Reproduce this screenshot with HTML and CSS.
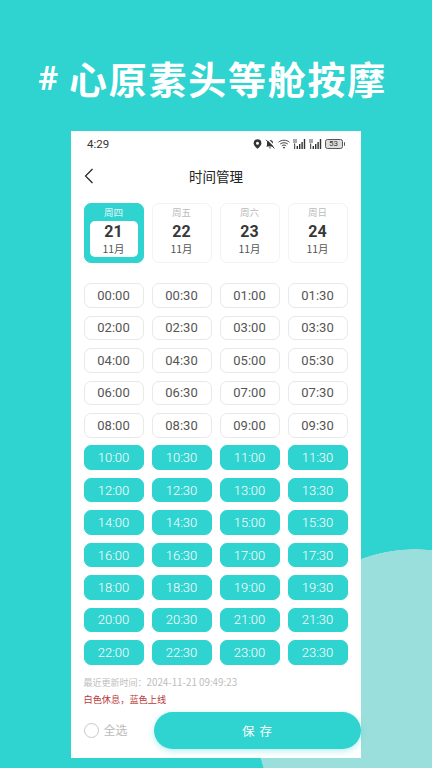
FILE: index.html
```html
<!DOCTYPE html>
<html lang="zh-CN">
<head>
<meta charset="utf-8">
<title>时间管理</title>
<link rel="stylesheet" href="styles.css">
</head>
<body>
<h1 class="headline"><span class="hash">#</span>心原素头等舱按摩</h1>
<main class="screen">
  <div class="status">
    <span class="clock">4:29</span>
    <div class="status-icons">
      <svg width="9" height="10" viewBox="0 0 9 10"><path fill="#333" fill-rule="evenodd" d="M4.5 0.3a3.9 3.9 0 0 1 3.9 3.9C8.4 6.6 4.5 9.8 4.5 9.8S.6 6.6.6 4.2A3.9 3.9 0 0 1 4.5.3zm0 2.4a1.5 1.5 0 1 0 0 3 1.5 1.5 0 0 0 0-3z"/></svg>
      <svg width="10" height="10" viewBox="0 0 10 10"><path fill="#333" d="M5 1a3 3 0 0 1 3 3v2.5l1 1H1l1-1V4a3 3 0 0 1 3-3zM4 8.4h2a1 1 0 0 1-2 0z"/><path stroke="#fff" stroke-width="1.6" d="M2.4 0l8 8.2"/><path stroke="#333" stroke-width="1" d="M1 .8l8.4 8.6"/></svg>
      <svg width="12" height="10" viewBox="0 0 12 10" fill="none" stroke="#333" stroke-width=".9"><path d="M.5 3.2C3.6.6 8.4.6 11.5 3.2M2.2 5C4.3 3.3 7.7 3.3 9.8 5M3.8 6.8c1.3-1 3.1-1 4.4 0"/><circle cx="6" cy="8.6" r=".9" fill="#333" stroke="none"/></svg>
      <svg width="13" height="10" viewBox="0 0 13 10"><g fill="#555"><rect x="0" y="0.5" width="4" height="1"/><rect x="0" y="2.5" width="4" height="1"/><rect x="1" y="4.5" width="1.2" height="5.5"/></g><g fill="#333"><rect x="3.6" y="7" width="1.4" height="3"/><rect x="6" y="5" width="1.4" height="5"/><rect x="8.4" y="3" width="1.4" height="7"/><rect x="10.8" y="0" width="1.4" height="10"/></g></svg>
      <svg width="13" height="10" viewBox="0 0 13 10"><g fill="#555"><rect x="0" y="0.5" width="4" height="1"/><rect x="0" y="2.5" width="4" height="1"/><rect x="1" y="4.5" width="1.2" height="5.5"/></g><g fill="#333"><rect x="3.6" y="7" width="1.4" height="3"/><rect x="6" y="5" width="1.4" height="5"/><rect x="8.4" y="3" width="1.4" height="7"/><rect x="10.8" y="0" width="1.4" height="10"/></g></svg>
      <span class="battery">53</span><span class="battery-tip"></span>
    </div>
  </div>
  <header class="nav">
    <svg class="back" width="10" height="16" viewBox="0 0 10 16" fill="none" stroke="#222" stroke-width="1.2"><path d="M8.5 1L1.5 8l7 7"/></svg>
    <span class="nav-title">时间管理</span>
  </header>
  <section class="dates">
    <div class="date date-on"><span class="week">周四</span><div class="date-body"><b>21</b><span>11月</span></div></div>
    <div class="date"><span class="week">周五</span><div class="date-body"><b>22</b><span>11月</span></div></div>
    <div class="date"><span class="week">周六</span><div class="date-body"><b>23</b><span>11月</span></div></div>
    <div class="date"><span class="week">周日</span><div class="date-body"><b>24</b><span>11月</span></div></div>
  </section>
  <section class="slots">
    <span class="slot">00:00</span><span class="slot">00:30</span><span class="slot">01:00</span><span class="slot">01:30</span>
    <span class="slot">02:00</span><span class="slot">02:30</span><span class="slot">03:00</span><span class="slot">03:30</span>
    <span class="slot">04:00</span><span class="slot">04:30</span><span class="slot">05:00</span><span class="slot">05:30</span>
    <span class="slot">06:00</span><span class="slot">06:30</span><span class="slot">07:00</span><span class="slot">07:30</span>
    <span class="slot">08:00</span><span class="slot">08:30</span><span class="slot">09:00</span><span class="slot">09:30</span>
    <span class="slot on">10:00</span><span class="slot on">10:30</span><span class="slot on">11:00</span><span class="slot on">11:30</span>
    <span class="slot on">12:00</span><span class="slot on">12:30</span><span class="slot on">13:00</span><span class="slot on">13:30</span>
    <span class="slot on">14:00</span><span class="slot on">14:30</span><span class="slot on">15:00</span><span class="slot on">15:30</span>
    <span class="slot on">16:00</span><span class="slot on">16:30</span><span class="slot on">17:00</span><span class="slot on">17:30</span>
    <span class="slot on">18:00</span><span class="slot on">18:30</span><span class="slot on">19:00</span><span class="slot on">19:30</span>
    <span class="slot on">20:00</span><span class="slot on">20:30</span><span class="slot on">21:00</span><span class="slot on">21:30</span>
    <span class="slot on">22:00</span><span class="slot on">22:30</span><span class="slot on">23:00</span><span class="slot on">23:30</span>
  </section>
  <p class="updated">最近更新时间：<span class="stamp">2024-11-21 09:49:23</span></p>
  <p class="legend">白色休息，蓝色上线</p>
  <footer class="actions">
    <label class="all"><span class="radio"></span>全选</label>
    <button class="save">保 存</button>
  </footer>
</main>
</body>
</html>
```
FILE: styles.css
```css
* { box-sizing: border-box; }
html, body { margin: 0; height: 100%; }
body {
  width: 432px;
  height: 768px;
  overflow: hidden;
  background: radial-gradient(160px 166px at 415px 715px, #9adfdc 99.7%, #2fd3d0 100%);
  background-color: #2fd3d0;
  font-family: "Roboto", "Noto Sans CJK SC", sans-serif;
  display: flex;
  flex-direction: column;
  align-items: flex-start;
  padding-top: 51px;
}
.headline {
  margin: 0 0 0 38px;
  height: 79.5px;
  display: flex;
  align-items: flex-start;
  color: #fff;
  font: 700 38px/54px "Noto Sans CJK SC", sans-serif;
  letter-spacing: 1.75px;
  white-space: nowrap;
}
.hash { margin-right: 9px; font-family: "Roboto", sans-serif; font-size: 34px; }
.screen {
  margin-left: 71px;
  width: 290px;
  height: 627.5px;
  background: #fff;
  padding: 0 12.5px;
}
.status {
  display: flex;
  justify-content: space-between;
  align-items: center;
  height: 27px;
  margin: 0 3.5px;
  color: #333;
  font-size: 11.5px;
}
.status-icons { display: flex; align-items: center; gap: 3px; }
.battery {
  width: 18px;
  height: 10px;
  border: 1px solid #555;
  border-radius: 2.5px;
  background: #ddd;
  color: #333;
  font-size: 8px;
  line-height: 8px;
  text-align: center;
}
.battery-tip { width: 1.5px; height: 4px; margin-left: -2px; background: #555; border-radius: 0 1px 1px 0; }
.nav {
  position: relative;
  display: flex;
  justify-content: center;
  align-items: center;
  height: 36px;
}
.nav-title { font-size: 13.5px; color: #222; font-family: "Noto Sans CJK SC", sans-serif; }
.back { position: absolute; left: 0; top: 10px; }
.dates {
  display: grid;
  grid-template-columns: repeat(4, 60px);
  gap: 8px;
  margin-top: 9.5px;
}
.date {
  height: 60px;
  border: 1px solid #f3f3f3;
  border-radius: 7px;
  display: flex;
  flex-direction: column;
  align-items: center;
  background: #fff;
  padding: 0 5px 5px;
}
.week { font: 9.5px/17px "Noto Sans CJK SC", sans-serif; color: #bbb; }
.date-body {
  flex: 1;
  align-self: stretch;
  display: flex;
  flex-direction: column;
  align-items: center;
  border-radius: 5px;
  background: #fff;
  font: 10.5px/12px "Noto Sans CJK SC", sans-serif;
  color: #555;
}
.date-body b { font: 700 16px/21.5px "Roboto", sans-serif; color: #383838; }
.date-on { background: #2fd3d0; border-color: #2fd3d0; }
.date-on .week { color: #e4fbfa; }
.slots {
  display: grid;
  grid-template-columns: repeat(4, 60px);
  grid-auto-rows: 24.5px;
  gap: 7.95px 8px;
  margin-top: 20.25px;
}
.slot {
  border: 1px solid #e8e8e8;
  border-radius: 7px;
  display: flex;
  align-items: center;
  justify-content: center;
  font-size: 13px;
  color: #555;
  background: #fff;
}
.slot.on { background: #2fd3d0; border-color: #2fd3d0; color: #fff; font-weight: 300; }
.updated { margin: 10px 0 0; font: 9px/14px "Noto Sans CJK SC", sans-serif; color: #bdbdbd; white-space: nowrap; }
.stamp { font-size: 9.8px; }
.legend { margin: 2.6px 0 0; font: 9.2px/14px "Noto Sans CJK SC", sans-serif; color: #b93a3a; }
.actions {
  display: flex;
  align-items: center;
  justify-content: space-between;
  margin: 5.7px -12.5px 0 0;
}
.all { display: flex; align-items: center; gap: 5px; color: #bbb; font: 12px/16px "Noto Sans CJK SC", sans-serif; }
.radio { width: 15px; height: 15px; border: 1px solid #c8c8c8; border-radius: 50%; }
.save {
  width: 207px;
  height: 37px;
  border: 0;
  border-radius: 19px;
  background: #2fd3d0;
  color: #fff;
  font: 12.5px "Noto Sans CJK SC", sans-serif;
  letter-spacing: 1px;
  box-shadow: 0 2px 6px rgba(47, 211, 208, .35);
}
```
